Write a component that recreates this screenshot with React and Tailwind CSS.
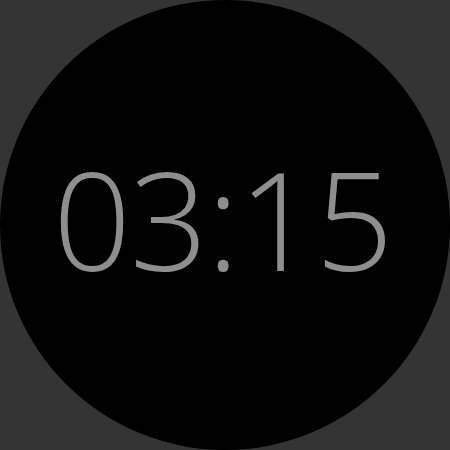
export default function App() {
  return (
    <div className="w-[450px] h-[450px] bg-[#343434] flex items-center justify-center">
      <div className="w-[450px] h-[450px] rounded-full bg-black flex items-center justify-center pb-[14px] pr-[5px]">
        <span
          className="text-[137px] font-[350] leading-none tracking-[-1.25px] text-[#8e8e8e]"
          style={{ fontFamily: '"Open Sans", sans-serif' }}
        >
          03:15
        </span>
      </div>
    </div>
  );
}
